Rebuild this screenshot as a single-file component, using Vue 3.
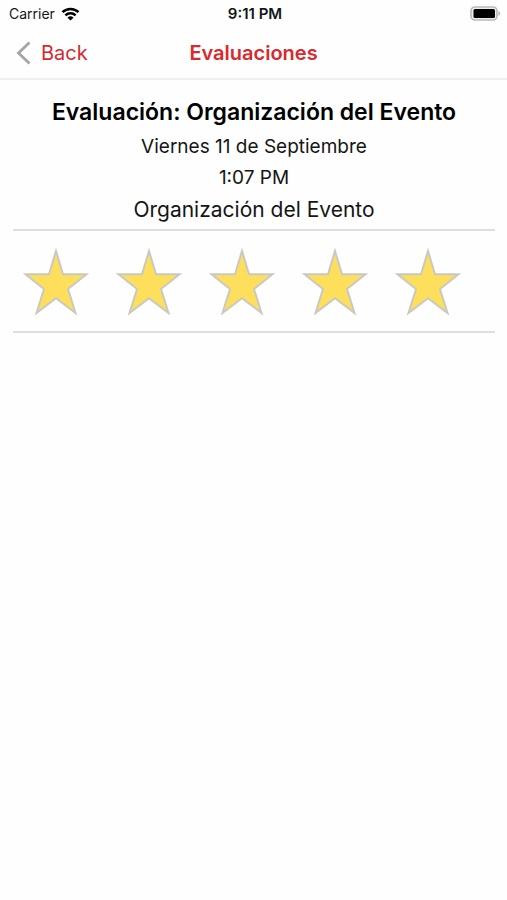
<script setup>
import { ref } from 'vue'

const rating = ref(5)
const stars = [1, 2, 3, 4, 5]
</script>

<template>
  <div class="screen">
    <div class="status">
      <div class="carrier">
        <span>Carrier</span>
        <svg width="19" height="14" viewBox="0 0 18 14" aria-hidden="true">
          <g fill="none" stroke="#000" stroke-width="2.5">
            <path d="M1 5.200a11.300 11.300 0 0 1 16 0" />
            <path d="M3.900 8.300a7.200 7.200 0 0 1 10.200 0" />
          </g>
          <path d="M9 13.600 6 10.700a4.300 4.300 0 0 1 6 0z" fill="#000" />
        </svg>
      </div>
      <span class="clock">9:11 PM</span>
      <svg class="battery" width="31" height="15" viewBox="0 0 31 15" aria-hidden="true">
        <rect x="1" y="1" width="26" height="13" rx="4" fill="#eee" stroke="#b9b9b9" stroke-width="1.6" />
        <rect x="3.500" y="3" width="21.500" height="9" rx="1.500" fill="#000" />
        <path d="M28.400 5.200c2.400.6 2.400 4 0 4.600z" fill="#b9b9b9" />
      </svg>
    </div>

    <header class="nav">
      <a class="back" href="#">
        <svg width="16" height="24" viewBox="0 0 16 24" aria-hidden="true">
          <path d="M13.500 1.500 2.500 12l11 10.500" fill="none" stroke="#a5a5a5" stroke-width="2.8" />
        </svg>
        <span>Back</span>
      </a>
      <h1>Evaluaciones</h1>
    </header>

    <main>
      <h2>Evaluación: Organización del Evento</h2>
      <p class="when">Viernes 11 de Septiembre</p>
      <p class="when">1:07 PM</p>
      <p class="topic">Organización del Evento</p>
      <div class="stars">
        <button
          v-for="n in stars"
          :key="n"
          type="button"
          :aria-label="`${n} de 5`"
          :aria-pressed="n <= rating"
          @click="rating = n"
        >
          <svg viewBox="0 0 68 68" :class="{ filled: n <= rating }" aria-hidden="true">
            <path d="M34 4 41 27.200H64.500L46 42 53.500 66 34 51.300 14.500 66 22 42 3.500 27.200H27Z" />
          </svg>
        </button>
      </div>
    </main>
  </div>
</template>

<style>
body {
  background: #fefefe;
}
</style>

<style scoped>
.screen {
  font-family: Inter, "Liberation Sans", sans-serif;
  color: #151515;
}

.status {
  display: grid;
  grid-template-columns: 1fr auto 1fr;
  align-items: center;
  height: 27px;
  padding: 0 6px 0 9px;
  font-size: 14px;
}

.carrier {
  display: flex;
  align-items: center;
  gap: 6px;
}

.clock {
  font-size: 15px;
  font-weight: 600;
}

.battery {
  justify-self: end;
}

.nav {
  display: grid;
  grid-template-columns: 1fr auto 1fr;
  align-items: center;
  height: 51px;
  padding: 0 16px;
  border-bottom: 2px solid #efefef;
}

.back {
  display: flex;
  align-items: center;
  gap: 9px;
  color: #d8292f;
  font-size: 20px;
  text-decoration: none;
}

h1,
h2,
p {
  margin: 0;
}

h1 {
  color: #d8292f;
  font-size: 20px;
  font-weight: 600;
}

main {
  padding: 16px 12px 0 13px;
  text-align: center;
}

h2 {
  margin-bottom: 3px;
  color: #000;
  font-size: 23px;
  font-weight: 600;
  line-height: 32px;
}

.when {
  font-size: 19px;
  line-height: 31px;
}

.topic {
  margin-bottom: 3px;
  font-size: 21px;
  line-height: 33px;
}

.stars {
  display: flex;
  gap: 25px;
  padding: 15px 9px;
  border-top: 2px solid #dedede;
  border-bottom: 2px solid #dedede;
}

.stars button {
  width: 68px;
  height: 70px;
  padding: 0;
  border: 0;
  background: none;
}

.stars svg {
  display: block;
  width: 68px;
  height: 68px;
  fill: #fff;
  stroke: #c9c9c2;
  stroke-width: 2px;
}

.stars svg.filled {
  fill: #fddf5c;
}
</style>
